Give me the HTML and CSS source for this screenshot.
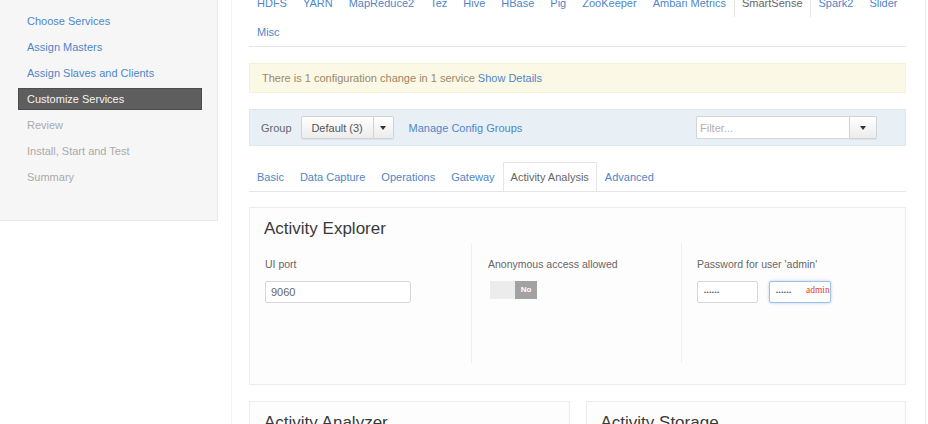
FILE: index.html
```html
<!DOCTYPE html>
<html lang="en">
<head>
<meta charset="utf-8">
<title>Customize Services</title>
<link rel="stylesheet" href="styles.css">
</head>
<body>
<div class="page">
  <aside class="sidebar">
    <ul class="steps">
      <li><a class="step done">Select Version</a></li>
      <li><a class="step done">Choose Services</a></li>
      <li><a class="step done">Assign Masters</a></li>
      <li><a class="step done">Assign Slaves and Clients</a></li>
      <li><a class="step active">Customize Services</a></li>
      <li><a class="step todo">Review</a></li>
      <li><a class="step todo">Install, Start and Test</a></li>
      <li><a class="step todo">Summary</a></li>
    </ul>
  </aside>
  <div class="main-wrap">
    <main class="main">
      <ul class="tabs service-tabs">
        <li><a>HDFS</a></li>
        <li><a>YARN</a></li>
        <li><a>MapReduce2</a></li>
        <li><a>Tez</a></li>
        <li><a>Hive</a></li>
        <li><a>HBase</a></li>
        <li><a>Pig</a></li>
        <li><a>ZooKeeper</a></li>
        <li><a>Ambari Metrics</a></li>
        <li class="active"><a>SmartSense</a></li>
        <li><a>Spark2</a></li>
        <li><a>Slider</a></li>
        <li><a>Misc</a></li>
      </ul>

      <div class="alert">There is 1 configuration change in 1 service <a class="link">Show Details</a></div>

      <div class="groupbar">
        <span class="group-label">Group</span>
        <div class="btn-group">
          <button class="btn btn-main">Default (3)</button>
          <button class="btn btn-caret"><span class="caret"></span></button>
        </div>
        <a class="link manage">Manage Config Groups</a>
        <div class="filter">
          <input class="filter-input" type="text" placeholder="Filter...">
          <button class="btn btn-caret filter-caret"><span class="caret"></span></button>
        </div>
      </div>

      <ul class="tabs sub-tabs">
        <li><a>Basic</a></li>
        <li><a>Data Capture</a></li>
        <li><a>Operations</a></li>
        <li><a>Gateway</a></li>
        <li class="active"><a>Activity Analysis</a></li>
        <li><a>Advanced</a></li>
      </ul>

      <section class="panel">
        <h3 class="panel-title">Activity Explorer</h3>
        <div class="cols">
          <div class="col">
            <div class="label">UI port</div>
            <input class="field port" type="text" value="9060">
          </div>
          <div class="col">
            <div class="label">Anonymous access allowed</div>
            <div class="toggle"><span class="toggle-off"></span><span class="toggle-no">No</span></div>
          </div>
          <div class="col">
            <div class="label">Password for user 'admin'</div>
            <div class="pw-row">
              <div class="field pw">••••••</div>
              <div class="pw-wrap">
                <div class="field pw focus">••••••</div>
                <span class="pw-hint">admin</span>
              </div>
            </div>
          </div>
        </div>
      </section>

      <div class="panel-row">
        <section class="panel small">
          <h3 class="panel-title">Activity Analyzer</h3>
        </section>
        <section class="panel small">
          <h3 class="panel-title">Activity Storage</h3>
        </section>
      </div>
    </main>
  </div>
</div>
</body>
</html>
```

FILE: styles.css
```css
html, body {
  margin: 0;
  padding: 0;
  overflow: hidden;
  background: #fff;
}
body {
  font-family: "Liberation Sans", Arial, sans-serif;
  font-size: 11px;
  color: #666;
}
ul {
  list-style: none;
  margin: 0;
  padding: 0;
}
a { cursor: pointer; }

.page {
  display: flex;
  align-items: flex-start;
  width: 925px;
  height: 460px;
  border-right: 1px solid #ececec;
}

/* Sidebar */
.sidebar {
  width: 217px;
  margin-top: -20px;
  padding: 1px 0 30px 0;
  background: #f6f6f7;
  border: 1px solid #e8e8ea;
  border-left: 0;
  flex: none;
}
.steps {
  padding: 0 15px 0 18px;
}
.step {
  display: block;
  height: 26px;
  line-height: 26px;
  padding-left: 9px;
}
.step.done { color: #4f86c9; }
.step.todo { color: #aaaaaa; }
.step.active {
  height: 20px;
  line-height: 20px;
  margin: 2px 0;
  background: #5e5e5e;
  border: 1px solid #4c4c4c;
  color: #f4f4f4;
  padding-left: 8px;
}

/* Main */
.main-wrap {
  margin-left: 13px;
  padding-left: 17px;
  padding-right: 18px;
  border-left: 1px solid #f3f3f4;
  height: 470px;
}
.main {
  width: 657px;
}

.tabs {
  display: flex;
  flex-wrap: wrap;
  border-bottom: 1px solid #e6e6ea;
  padding-left: 0;
}
.tabs li a {
  display: block;
  padding: 0 7px;
  border: 1px solid transparent;
  border-bottom: 0;
  color: #4f86c9;
  white-space: nowrap;
}
.tabs li.active a {
  color: #666;
  border-color: #e6e6ea;
  background: #fff;
}
.service-tabs {
  margin-top: -12px;
}
.service-tabs li a {
  line-height: 28px;
}
.service-tabs li:nth-child(13) {
  margin-right: 600px;
}

/* Alert */
.alert {
  margin-top: 16px;
  height: 28px;
  line-height: 28px;
  padding: 0 12px;
  background: #fbf8e5;
  border: 1px solid #f7f2d6;
  color: #9c8868;
}
.link { color: #4f86c9; }

/* Group bar */
.groupbar {
  margin-top: 16px;
  display: flex;
  align-items: center;
  padding: 6px 28px 6px 11px;
  background: #e8f0f6;
  border: 1px solid #dce7ef;
}
.group-label {
  color: #666;
  margin-right: 9px;
}
.btn-group {
  display: flex;
}
.btn {
  box-sizing: border-box;
  font-family: "Liberation Sans", Arial, sans-serif;
  font-size: 11px;
  color: #555;
  height: 23px;
  margin: 0;
  padding: 0;
  white-space: nowrap;
  background: linear-gradient(#ffffff, #ececec);
  border: 1px solid #d2d2d2;
  border-radius: 2px;
  box-shadow: 0 1px 1px rgba(0,0,0,0.06);
  display: flex;
  align-items: center;
  justify-content: center;
}
.btn-main {
  width: 73px;
  border-radius: 2px 0 0 2px;
}
.btn-caret {
  width: 20px;
  border-left: 0;
  border-radius: 0 2px 2px 0;
}
.caret {
  width: 0;
  height: 0;
  border-left: 3px solid transparent;
  border-right: 3px solid transparent;
  border-top: 4px solid #333;
}
.manage {
  margin-left: 15px;
}
.filter {
  margin-left: auto;
  display: flex;
}
.filter-input {
  box-sizing: border-box;
  width: 153px;
  height: 23px;
  margin: 0;
  padding: 0 3px;
  border: 1px solid #d4d4d4;
  border-right: 0;
  border-radius: 2px 0 0 2px;
  font-family: "Liberation Sans", Arial, sans-serif;
  font-size: 11px;
  background: #fff;
}
.filter-input::placeholder { color: #b0b0b0; }
.filter-caret {
  width: 28px;
  border-left: 1px solid #d2d2d2;
}

/* Sub tabs */
.sub-tabs {
  margin-top: 16px;
}
.sub-tabs li a {
  line-height: 28px;
}

/* Panels */
.panel {
  margin-top: 15px;
  border: 1px solid #ececef;
  background: #fdfdfe;
  padding: 11px 0 21px 0;
}
.panel-title {
  margin: 0;
  padding-left: 14px;
  font-size: 17px;
  line-height: 20px;
  font-weight: normal;
  color: #3a3a3a;
}
.cols {
  margin-top: 4px;
  display: grid;
  grid-template-columns: 221px 210px 1fr;
  height: 120px;
}
.col {
  padding: 15px 0 0 15px;
}
.col + .col {
  border-left: 1px solid #efeff2;
}
.col:nth-child(2) { padding-left: 16px; }
.label {
  line-height: 12px;
  color: #666;
  font-size: 10.5px;
}
.field {
  box-sizing: border-box;
  height: 22px;
  margin-top: 11px;
  border: 1px solid #d8d8d8;
  border-radius: 2px;
  background: #fff;
  font-family: "Liberation Sans", Arial, sans-serif;
  font-size: 11px;
  color: #666;
  padding: 0 5px;
  display: block;
}
.port {
  width: 146px;
  outline: none;
}
.toggle {
  display: flex;
  margin-top: 11px;
  margin-left: 2px;
  height: 18px;
  width: 47px;
}
.toggle-off {
  width: 25px;
  background: #ececec;
}
.toggle-no {
  width: 22px;
  background: #a2a2a2;
  color: #fff;
  font-size: 8px;
  font-weight: bold;
  line-height: 18px;
  text-align: center;
}
.pw-row {
  display: flex;
  gap: 11px;
}
.pw {
  width: 61px;
  line-height: 20px;
  font-size: 6px;
  color: #555;
  letter-spacing: 0.5px;
  padding-left: 6px;
}
.pw-wrap {
  position: relative;
}
.pw.focus {
  width: 62px;
  border-color: #9cc2e8;
  box-shadow: 0 0 3px rgba(102,160,220,0.5);
}
.pw-hint {
  position: absolute;
  left: 37px;
  top: 15px;
  font-family: "Liberation Serif", "Times New Roman", serif;
  font-size: 9.5px;
  color: #e0443a;
}

.panel-row {
  display: flex;
  gap: 16px;
  margin-top: 16px;
}
.panel-row .panel {
  flex: 1;
  margin-top: 0;
  height: 60px;
}
```
